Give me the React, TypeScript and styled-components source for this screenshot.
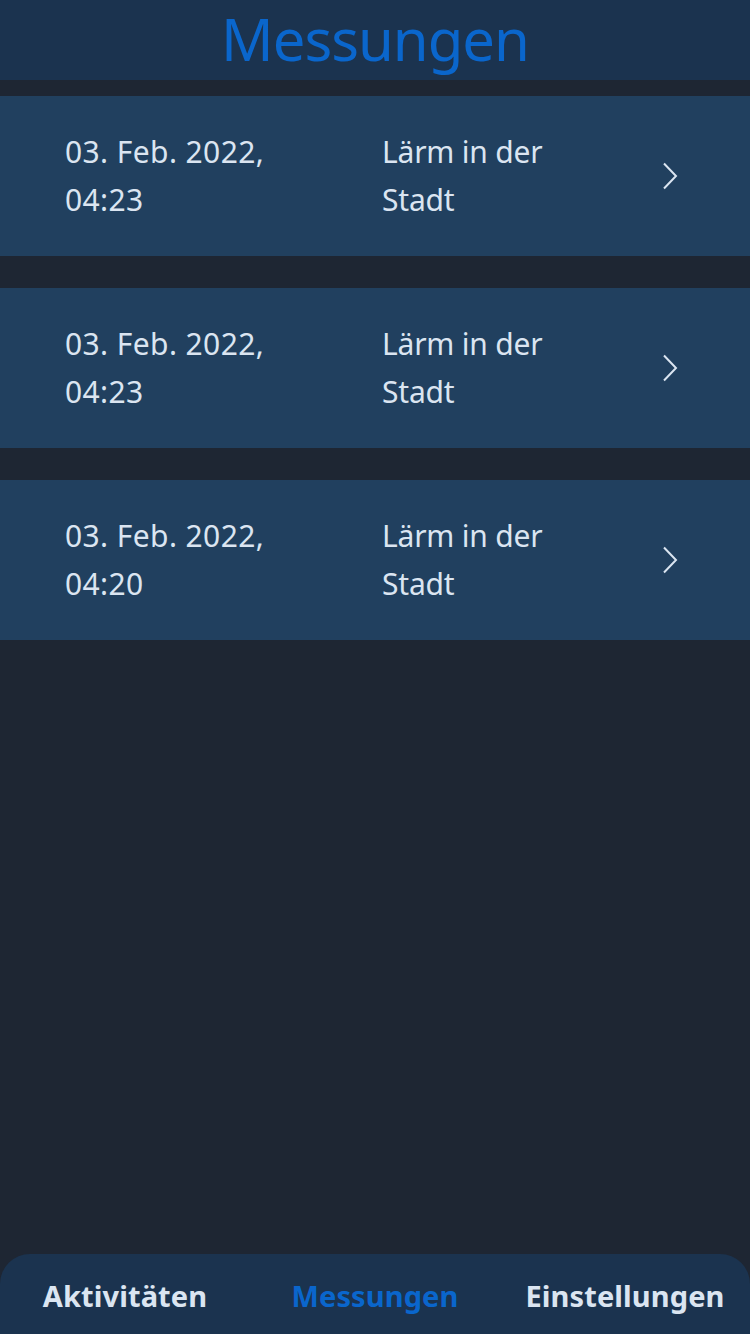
import React from "react";
import styled, { createGlobalStyle } from "styled-components";

const GlobalStyle = createGlobalStyle`
  html, body {
    margin: 0;
    padding: 0;
    background: #1e2633;
  }
  body {
    font-family: "Noto Sans", "Open Sans", sans-serif;
  }
`;

const Page = styled.div`
  width: 750px;
  height: 1334px;
  background: #1e2633;
  display: flex;
  flex-direction: column;
  overflow: hidden;
`;

const Header = styled.header`
  height: 80px;
  box-sizing: border-box;
  padding-bottom: 2px;
  background: #1b334f;
  display: flex;
  align-items: center;
  justify-content: center;
`;

const Title = styled.h1`
  margin: 0;
  font-size: 58px;
  font-weight: 400;
  color: #0a66cc;
  line-height: 78px;
  letter-spacing: -1px;
`;

const List = styled.div`
  display: flex;
  flex-direction: column;
  gap: 32px;
  padding-top: 16px;
  flex: 1;
`;

const Row = styled.div`
  height: 160px;
  background: #21405f;
  display: grid;
  grid-template-columns: 317px 1fr auto;
  align-items: center;
  padding: 0 72px 0 65px;
`;

const Cell = styled.div<{ $w: number; $ls: number }>`
  max-width: ${(p) => p.$w}px;
  font-size: 30px;
  line-height: 48px;
  color: #dbe5f1;
  letter-spacing: ${(p) => p.$ls}px;
`;

const Chevron = styled.svg`
  width: 16px;
  height: 28px;
  display: block;
`;

const Nav = styled.nav`
  height: 80px;
  background: #1b334f;
  border-radius: 30px 30px 0 0;
  display: grid;
  grid-template-columns: repeat(3, 1fr);
  align-items: center;
`;

const NavItem = styled.div<{ $active?: boolean }>`
  text-align: center;
  font-size: 29px;
  font-weight: 700;
  letter-spacing: 0.1px;
  color: ${(p) => (p.$active ? "#0a66cc" : "#dbe5f1")};
  padding-top: 2px;
`;

const rows = [
  { date: "03. Feb. 2022, 04:23", title: "Lärm in der Stadt" },
  { date: "03. Feb. 2022, 04:23", title: "Lärm in der Stadt" },
  { date: "03. Feb. 2022, 04:20", title: "Lärm in der Stadt" },
];

export default function App() {
  return (
    <Page>
      <GlobalStyle />
      <Header>
        <Title>Messungen</Title>
      </Header>
      <List>
        {rows.map((r, i) => (
          <Row key={i}>
            <Cell $w={235} $ls={0.4}>{r.date}</Cell>
            <Cell $w={190} $ls={-0.2}>{r.title}</Cell>
            <Chevron viewBox="0 0 16 28">
              <path d="M2 1.5 L14 14 L2 26.5" fill="none" stroke="#dbe5f1" strokeWidth="2" />
            </Chevron>
          </Row>
        ))}
      </List>
      <Nav>
        <NavItem>Aktivitäten</NavItem>
        <NavItem $active>Messungen</NavItem>
        <NavItem>Einstellungen</NavItem>
      </Nav>
    </Page>
  );
}
